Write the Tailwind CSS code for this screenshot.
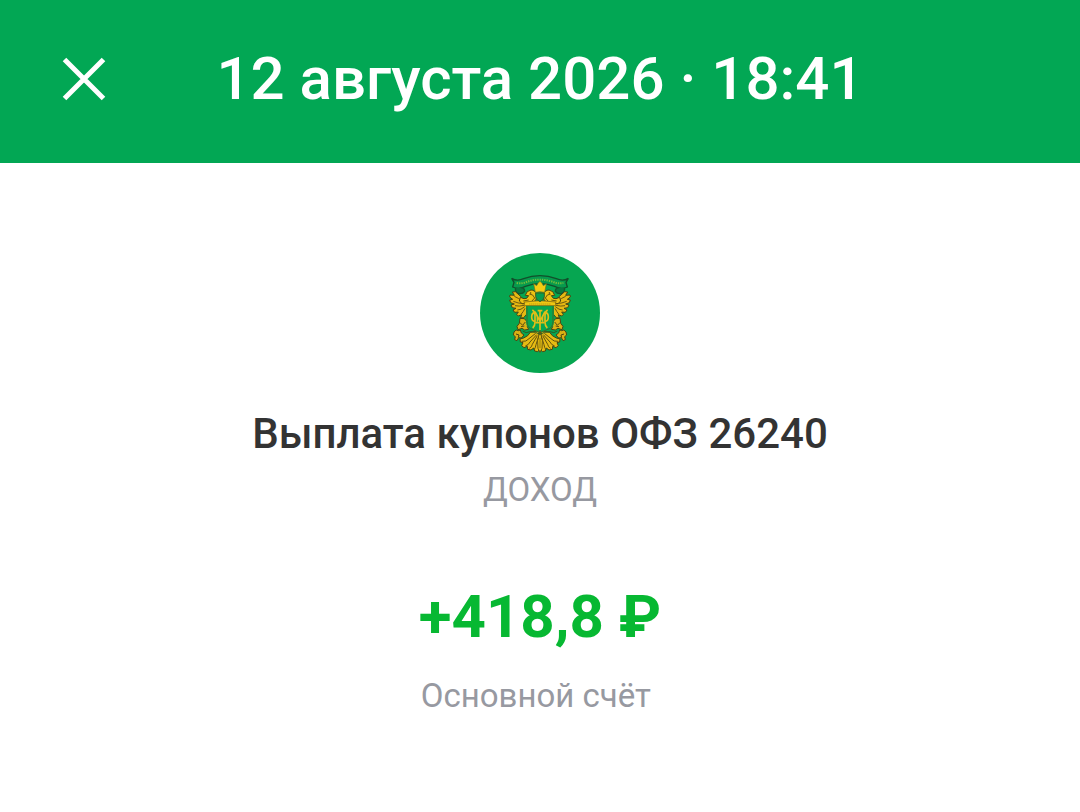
<!DOCTYPE html>
<html lang="ru">
<head>
  <meta charset="UTF-8">
  <meta name="viewport" content="width=device-width, initial-scale=1.0">
  <title>Выплата купонов ОФЗ 26240</title>
  <script src="https://cdn.jsdelivr.net/npm/@tailwindcss/browser@4"></script>
</head>
<body class="min-h-screen bg-white font-['Roboto','Liberation_Sans',sans-serif]">

  <!-- Header -->
  <header class="flex items-center bg-[#02a754] px-12 pt-[39px] pb-[44px]">
    <button type="button" aria-label="Закрыть" class="flex size-18 shrink-0 items-center justify-center text-white">
      <svg class="size-12" viewBox="0 0 48 48" fill="none" stroke="currentColor" stroke-width="5">
        <path d="M4.5 4.5l39 39M43.5 4.5l-39 39"/>
      </svg>
    </button>
    <h1 class="flex-1 text-center text-[60px] leading-[80px] font-medium text-white">12 августа 2026 · 18:41</h1>
    <div class="w-18 shrink-0"></div>
  </header>

  <!-- Operation details -->
  <main class="flex flex-col items-center px-6 pt-[90px] pb-20 text-center">
    <svg class="size-[120px]" viewBox="30 30 360 360" role="img" aria-label="Эмблема Минфина">
      <circle cx="210" cy="210" r="180" fill="#06a651"/>

      <!-- ribbon -->
      <path d="M125 106q16 10 36 1q24-9 49-9t49 9q20 9 36-1l-7 12 4 14q-18 9-38-2q-20-8-44-8t-44 8q-20 11-38 2l4-14z" fill="#079a4d" stroke="#124f2b" stroke-width="4"/>
      <path d="M140 120q18 3 32-4q36-12 76 0q14 7 32 4" fill="none" stroke="#74bd3c" stroke-width="6" stroke-dasharray="4 3"/>
      <path d="M137 135q-3 12 7 16q14 3 20-6q0-11-12-11M283 135q3 12-7 16q-14 3-20-6q0-11 12-11" fill="#08793f" stroke="#115a2e" stroke-width="4"/>

      <g id="wing" stroke="#4a4412" stroke-width="3" stroke-linejoin="round">
        <!-- wing feathers, outer to inner -->
        <path d="M168 184l-14-22-18-16-9 1 6 10-13-1-1 6 9 7-9 2 3 8 11 4-10 3 4 8 11 2-9 5 5 7 11-1-5 7 5 5 10-4-3 10 9-1 8-9 3 8 8-12 4-20z" fill="#e6b913"/>
        <path d="M133 160q14 5 25 17M130 175q14 6 29 7M135 188q12 3 27-1M142 201q11 0 22-10M154 213q5-5 11-17" fill="none" stroke="#6b590f"/>
        <!-- head and neck -->
        <path d="M166 157q3-14 17-16q12 0 17 13q2 16-12 28h-32l-8-8 3-11 11 4 8-1 6-8z" fill="#eec214"/>
        <path d="M178 153l10 3 6 9-9 10M160 174l16-3" fill="none" stroke="#6b590f"/>
        <circle cx="182" cy="150" r="2" fill="#333a10" stroke="none"/>
        <!-- leg and orb -->
        <path d="M150 226l13 1 11 12-2 12 4 8-12 2-8-5-12 4-3-10 7-9z" fill="#dcb214"/>
        <path d="M149 238l9 9 8-10M153 251l10-2" fill="none" stroke="#5c4d10"/>
        <path d="M132 267q6-10 13-4l6-2 3 9 8 6-8 9-8-1-5 9-7-3 2-9-6-5z" fill="#d9b013"/>
        <path d="M138 273l9 3-2 8" fill="none"/>
        <!-- tail feathers -->
        <path d="M207 262l-14 4-12 2-8 10-12 7-11 3 1 9 8 2-4 9 7 6 10-4 1 9 10 2 8-6 3 9 9 2 4-5z" fill="#e6bb13"/>
        <path d="M155 295q14 2 22-8l20-16M166 309q10-3 14-12l20-22M178 316q8-4 9-12l15-26M192 321q5-8 6-16l7-22" fill="none" stroke="#62520f"/>
      </g>
      <use href="#wing" transform="translate(420 0) scale(-1 1)"/>

      <!-- shield -->
      <path d="M168 186h84v50q0 18-20 24l-22 9-22-9q-20-6-20-24z" fill="#06a651"/>
      <path d="M171 190v45q0 20 18 25l21 9 21-9q18-5 18-25v-45" fill="none" stroke="#3a6a2a" stroke-width="3"/>
      <path d="M163 177q47-8 94 0v11h-94z" fill="#f0c713" stroke="#695711" stroke-width="2"/>
      <path d="M178 183h64" stroke="#8a7418" stroke-width="2" stroke-dasharray="3 3"/>

      <!-- monogram -->
      <g fill="none" stroke="#e2be18" stroke-width="5">
        <path d="M187 201q8 4 8 15v22q0 11-7 17M233 201q-8 4-8 15v22q0 11 7 17"/>
        <path d="M195 209q-10 0-10 13t10 13M225 209q10 0 10 13t-10 13"/>
        <path d="M195 206l15 29 15-29M210 200v61M196 239h28M203 203h14"/>
        <path d="M202 220v16M218 220v16" stroke-width="4"/>
      </g>

      <!-- crown and small shield between the heads -->
      <path d="M197 150h26v11q-2 10-13 15q-11-5-13-15z" fill="#079d4f" stroke="#3d6022" stroke-width="3"/>
      <path d="M196 148l-5-26 9 6 4-7 6-6 6 6 4 7 9-6-5 26q-14-4-28 0z" fill="#f4cc12" stroke="#77701a" stroke-width="2"/>

      <!-- tail centre -->
      <path d="M210 263l-7 30 1 23 6 12 6-12 1-23z" fill="#f2c813" stroke="#625210" stroke-width="3"/>
      <path d="M210 284v32" stroke="#86700f" stroke-width="3"/>
      <path d="M158 264q10 9 22 2q18 0 30 8q12-8 30-8q12 7 22-2" fill="none" stroke="#2b5a23" stroke-width="3"/>
    </svg>

    <h2 class="mt-8 text-[42px] leading-[58px] font-medium text-[#333333]">Выплата купонов ОФЗ 26240</h2>
    <p class="mt-1 text-[33px] leading-[46px] text-[#9799a1]">ДОХОД</p>
    <p class="mt-16 text-[60px] leading-[80px] font-bold text-[#07b832]">+418,8 ₽</p>
    <p class="mt-4 text-[33px] leading-[46px] text-[#9799a1]">Основной счёт&nbsp;</p>
  </main>

</body>
</html>
